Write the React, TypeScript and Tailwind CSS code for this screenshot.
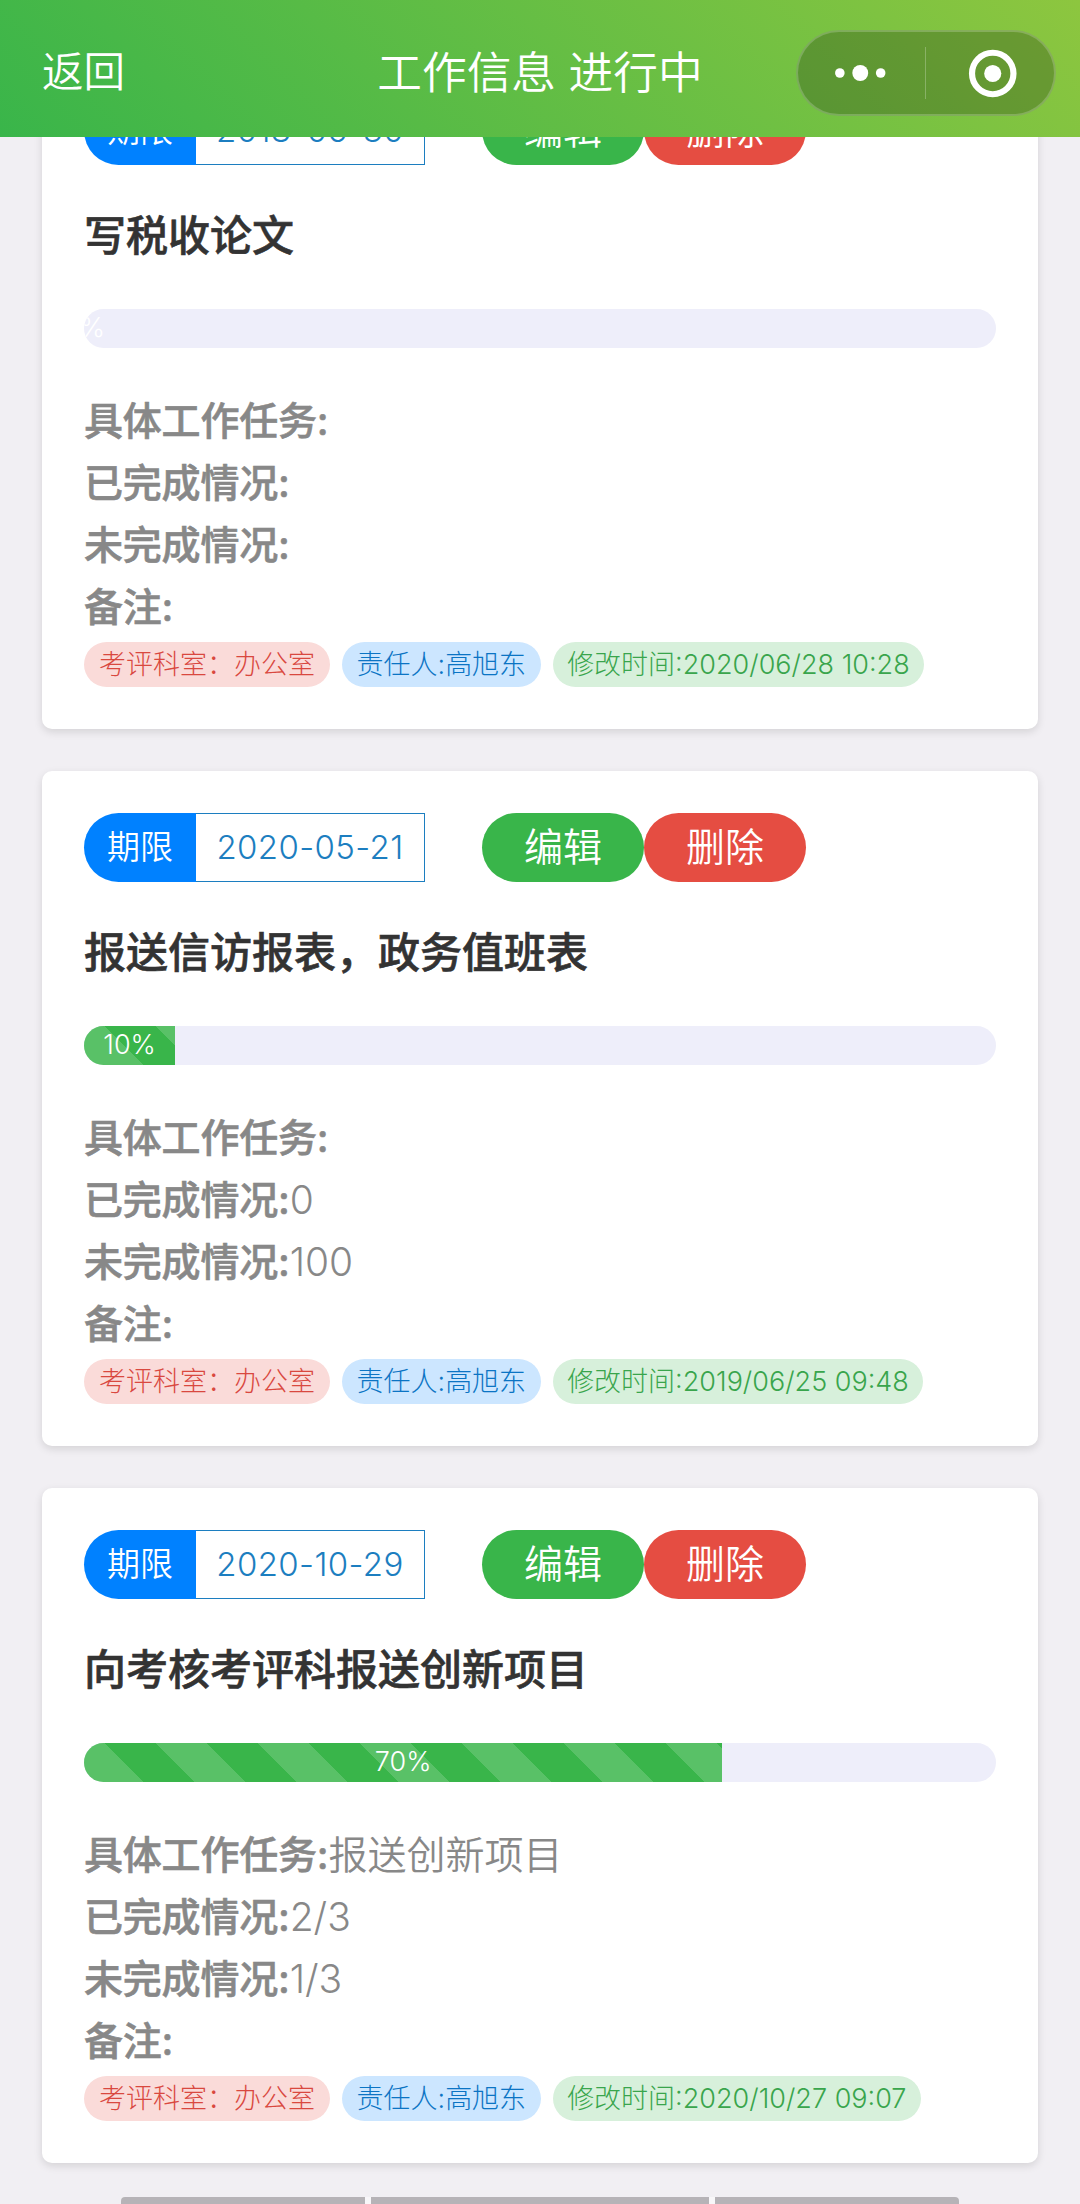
interface Task {
    deadline: string;
    title: string;
    progress: number;
    detail?: string;
    done?: string;
    undone?: string;
    remark?: string;
    office: string;
    owner: string;
    updatedAt: string;
}

const tasks: Task[] = [
    {
        deadline: "2018-06-30",
        title: "写税收论文",
        progress: 0,
        office: "办公室",
        owner: "高旭东",
        updatedAt: "2020/06/28 10:28",
    },
    {
        deadline: "2020-05-21",
        title: "报送信访报表，政务值班表",
        progress: 10,
        done: "0",
        undone: "100",
        office: "办公室",
        owner: "高旭东",
        updatedAt: "2019/06/25 09:48",
    },
    {
        deadline: "2020-10-29",
        title: "向考核考评科报送创新项目",
        progress: 70,
        detail: "报送创新项目",
        done: "2/3",
        undone: "1/3",
        office: "办公室",
        owner: "高旭东",
        updatedAt: "2020/10/27 09:07",
    },
];

const Capsule = () => (
    <div className="flex h-[86px] w-[260px] items-center rounded-full border-2 border-white/20 bg-black/22">
        <svg className="h-full flex-1" viewBox="0 0 128 82" fill="#fff">
            <circle cx="42" cy="41" r="4.8" />
            <circle cx="62.5" cy="41" r="8" />
            <circle cx="83" cy="41" r="4.8" />
        </svg>
        <div className="h-[52px] w-px bg-white/25" />
        <svg className="h-full flex-1" viewBox="0 0 128 82">
            <circle cx="67" cy="41.5" r="20.8" fill="none" stroke="#fff" strokeWidth="6.2" />
            <circle cx="67" cy="41.5" r="8.6" fill="#fff" />
        </svg>
    </div>
);

const Header = () => (
    <header className="relative z-10 flex h-[137px] shrink-0 items-center justify-between bg-[linear-gradient(45deg,#39b54a,#8dc63f)] pt-[9px] pr-[24px] pl-[42px] text-white">
        <span className="w-[242px] text-[41.5px] leading-none font-[350]">返回</span>
        <h1 className="text-[44.7px] leading-none font-[350]">工作信息 进行中</h1>
        <Capsule />
    </header>
);

const ProgressBar = ({ value }: { value: number }) => (
    <div className="mt-[44px] flex h-[39px] overflow-hidden rounded-full bg-[#eeeefa]">
        <div
            className="flex items-center justify-center bg-[#39b54a] bg-[linear-gradient(45deg,rgba(255,255,255,0.16)_25%,transparent_25%,transparent_50%,rgba(255,255,255,0.16)_50%,rgba(255,255,255,0.16)_75%,transparent_75%)] bg-[length:102px_102px] bg-[position:-30px_0] text-[27px] font-light text-white"
            style={{ width: `${value}%` }}
        >
            <span className="shrink-0">{value}%</span>
        </div>
    </div>
);

const Row = ({ label, value }: { label: string; value?: string }) => (
    <div className="h-[62px] leading-[64px]">
        <span className="font-medium tracking-[-0.2px] [-webkit-text-stroke:0.6px_currentColor]">{label}:</span>
        <span className="font-[350]">{value}</span>
    </div>
);

const TaskCard = ({ task }: { task: Task }) => (
    <article className="h-[675px] rounded-[10px] bg-white p-[42px] shadow-[0_3px_8px_rgba(0,0,0,0.12)]">
        <div className="flex h-[69px] items-stretch">
            <span className="flex w-[112px] items-center justify-center rounded-l-full bg-[#0081ff] text-[33px] font-[350] text-white">
                期限
            </span>
            <span className="flex w-[229px] items-center justify-center border border-l-0 border-[#1c7ec0] text-[33px] font-light tracking-[0.4px] text-[#1c7ec0]">
                {task.deadline}
            </span>
            <button className="ml-[57px] w-[162px] rounded-full bg-[#39b54a] text-[39px] font-[350] text-white">编辑</button>
            <button className="w-[162px] rounded-full bg-[#e54d42] text-[39px] font-[350] text-white">删除</button>
        </div>
        <h2 className="mt-[40px] h-[60px] text-[42px] leading-[62px] font-medium text-[#333] [-webkit-text-stroke:0.6px_currentColor]">{task.title}</h2>
        <ProgressBar value={task.progress} />
        <div className="mt-[41px] text-[39px] text-[#888]">
            <Row label="具体工作任务" value={task.detail} />
            <Row label="已完成情况" value={task.done} />
            <Row label="未完成情况" value={task.undone} />
            <Row label="备注" value={task.remark} />
        </div>
        <div className="mt-[5px] flex gap-[12px] text-[27px] leading-[45px] font-light whitespace-nowrap">
            <span className="rounded-full bg-[#fadbd9] px-[15px] text-[#d9483f]">考评科室：{task.office}</span>
            <span className="rounded-full bg-[#cce6ff] px-[14.5px] text-[#0b74c4]">责任人:{task.owner}</span>
            <span className="rounded-full bg-[#d7f0db] px-[14.5px] text-[#39a54c]">修改时间:{task.updatedAt}</span>
        </div>
    </article>
);

export default function App() {
    return (
        <div className="flex h-[2204px] w-[1080px] flex-col overflow-hidden bg-[#f1eff3] font-[Inter,'Noto_Sans_CJK_SC',sans-serif]">
            <Header />
            {/* list is scrolled so the first card slides under the header */}
            <main className="-mt-[83px] flex shrink-0 flex-col gap-[42px] px-[42px]">
                {tasks.map((task) => (
                    <TaskCard key={task.title} task={task} />
                ))}
            </main>
            <div className="mt-[34px] flex h-[30px] shrink-0 gap-[6px] self-center overflow-hidden rounded-[4px] bg-[#f8f7f9]">
                <div className="w-[244px] bg-[#b6b3b7]" />
                <div className="w-[338px] bg-[#b6b3b7]" />
                <div className="w-[244px] bg-[#b6b3b7]" />
            </div>
        </div>
    );
}
